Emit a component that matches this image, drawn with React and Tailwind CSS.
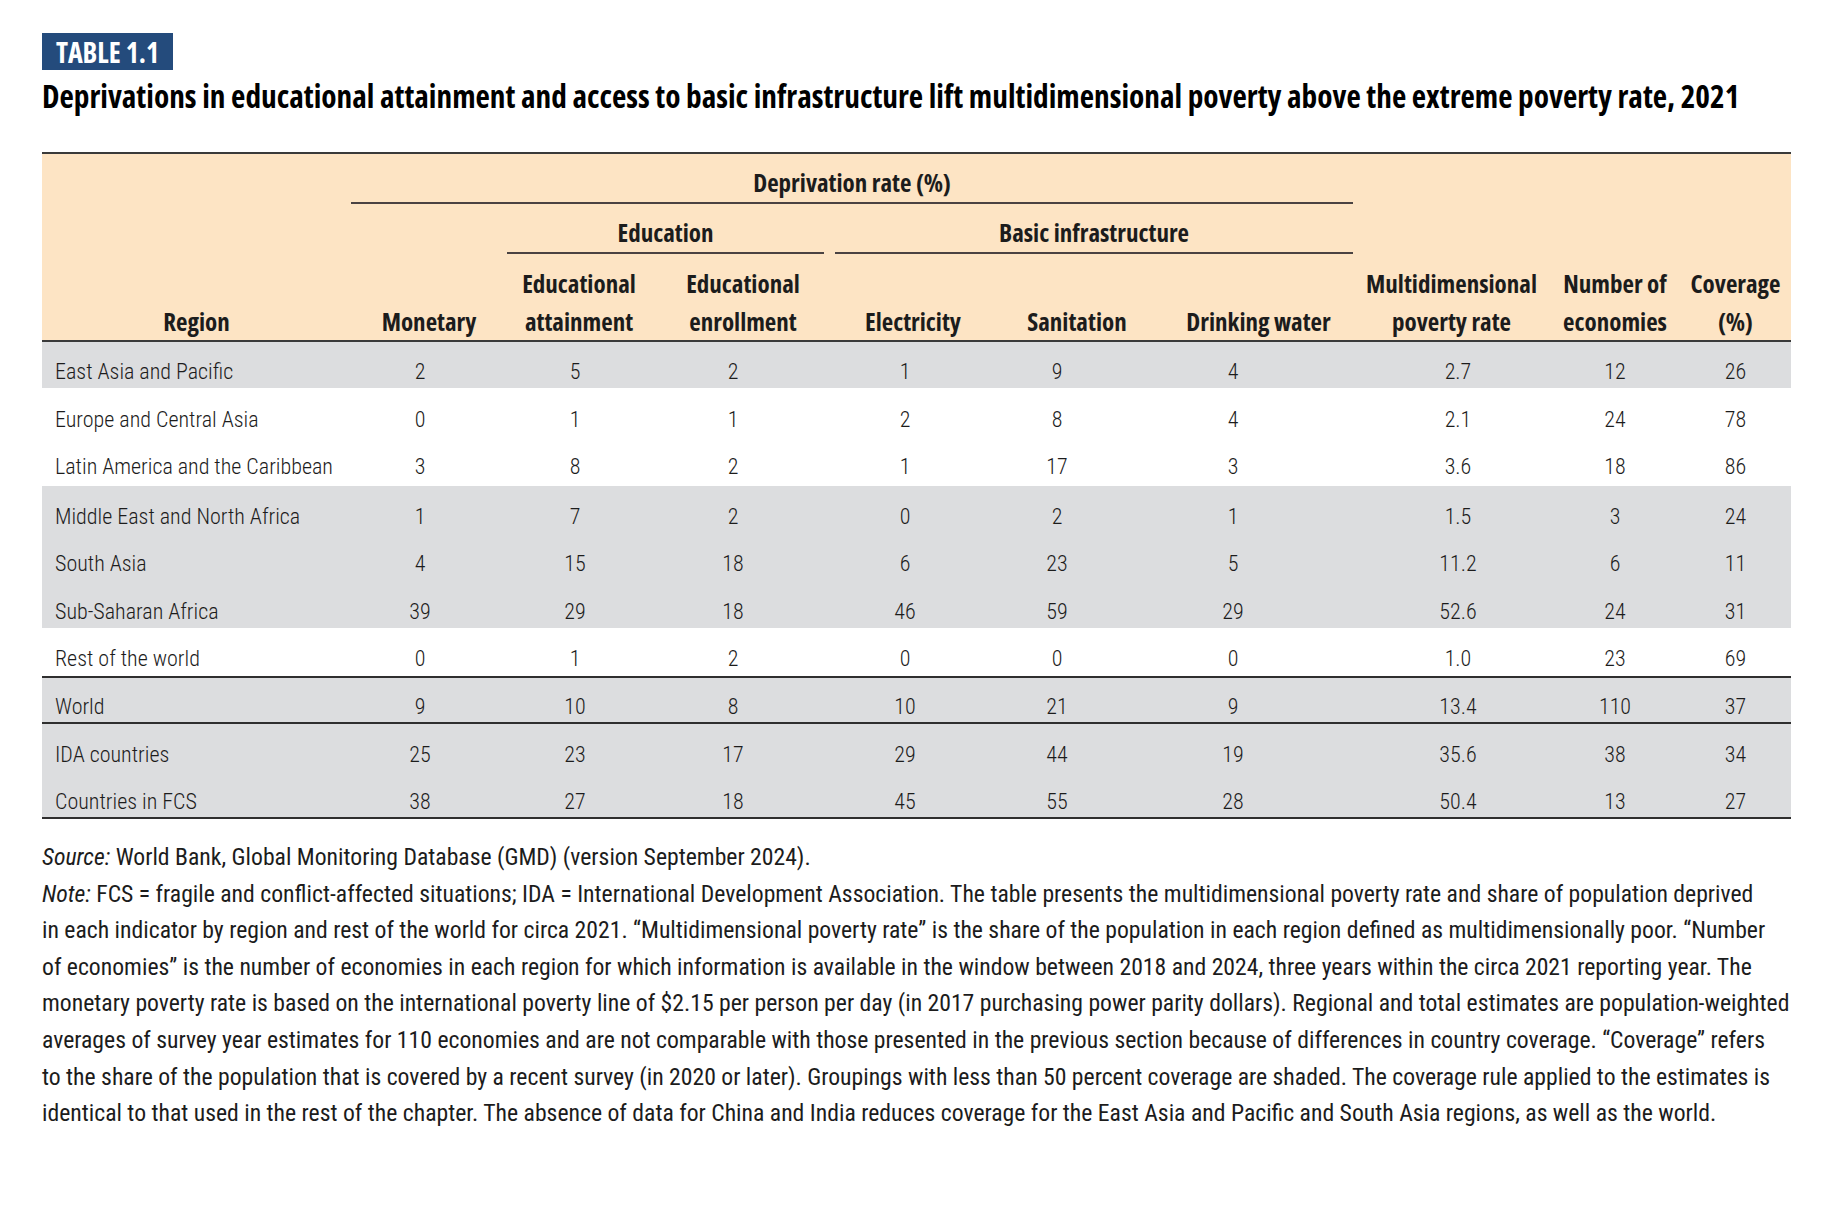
const COLS = 'grid grid-cols-[309px_156px_154px_169px_166px_162px_195px_197px_130px_111px]';

// horizontal nudges for the data cells, one per numeric column
const CELL_PAD = [
  'pr-[18px]',
  'pr-[18px]',
  'pr-[25px]',
  'pr-[16px]',
  'pr-[40px]',
  'pr-[45px]',
  'pl-[13px]',
  'pr-[0px]',
  'pr-[0px]',
];

const ROWS = [
  { region: 'East Asia and Pacific', v: ['2', '5', '2', '1', '9', '4', '2.7', '12', '26'], shade: true, cls: 'h-[46px] pt-[18px]' },
  { region: 'Europe and Central Asia', v: ['0', '1', '1', '2', '8', '4', '2.1', '24', '78'], cls: 'h-[48px] pt-[20px]' },
  { region: 'Latin America and the Caribbean', v: ['3', '8', '2', '1', '17', '3', '3.6', '18', '86'], cls: 'h-[50px] pt-[19px]' },
  { region: 'Middle East and North Africa', v: ['1', '7', '2', '0', '2', '1', '1.5', '3', '24'], shade: true, cls: 'h-[47px] pt-[19px]' },
  { region: 'South Asia', v: ['4', '15', '18', '6', '23', '5', '11.2', '6', '11'], shade: true, cls: 'h-[47px] pt-[19px]' },
  { region: 'Sub-Saharan Africa', v: ['39', '29', '18', '46', '59', '29', '52.6', '24', '31'], shade: true, cls: 'h-[48px] pt-[20px]' },
  { region: 'Rest of the world', v: ['0', '1', '2', '0', '0', '0', '1.0', '23', '69'], cls: 'h-[48px] pt-[19px]' },
  { region: 'World', v: ['9', '10', '8', '10', '21', '9', '13.4', '110', '37'], shade: true, cls: 'h-[48px] pt-[17px] border-y-2 border-[#2f2f2f]' },
  { region: 'IDA countries', v: ['25', '23', '17', '29', '44', '19', '35.6', '38', '34'], shade: true, cls: 'h-[47px] pt-[19px]' },
  { region: 'Countries in FCS', v: ['38', '27', '18', '45', '55', '28', '50.4', '13', '27'], shade: true, cls: 'h-[48px] pt-[19px] border-b-2 border-[#2f2f2f]' },
];

const NOTE_LINES = [
  'in each indicator by region and rest of the world for circa 2021. \u201cMultidimensional poverty rate\u201d is the share of the population in each region defined as multidimensionally poor. \u201cNumber',
  'of economies\u201d is the number of economies in each region for which information is available in the window between 2018 and 2024, three years within the circa 2021 reporting year. The',
  'monetary poverty rate is based on the international poverty line of $2.15 per person per day (in 2017 purchasing power parity dollars). Regional and total estimates are population-weighted',
  'averages of survey year estimates for 110 economies and are not comparable with those presented in the previous section because of differences in country coverage. \u201cCoverage\u201d refers',
  'to the share of the population that is covered by a recent survey (in 2020 or later). Groupings with less than 50 percent coverage are shaded. The coverage rule applied to the estimates is',
  'identical to that used in the rest of the chapter. The absence of data for China and India reduces coverage for the East Asia and Pacific and South Asia regions, as well as the world.',
];

function HeadCell({ children, className = '' }) {
  return (
    <div className={`flex flex-col items-center justify-end text-center leading-[38px] ${className}`}>
      {children}
    </div>
  );
}

export default function App() {
  return (
    <div className="min-h-screen bg-white pl-[42px] pt-[33px] font-['Roboto',sans-serif] text-[#1c1c1c]">
      <div className="inline-flex h-[37px] w-[131px] items-center justify-center bg-[#244b7c] font-['Open_Sans',sans-serif] text-[28px] font-bold text-white font-stretch-condensed">
        TABLE 1.1
      </div>
      <h1 className="mt-[8px] h-[36px] font-['Open_Sans',sans-serif] text-[31.3px] leading-[36px] font-bold text-black font-stretch-condensed">
        Deprivations in educational attainment and access to basic infrastructure lift multidimensional poverty above the extreme poverty rate, 2021
      </h1>

      <div className="mt-[38px] w-[1749px]">
        {/* header */}
        <div className="border-y-2 border-[#3a3a3a] bg-[#fde4c4] font-['Open_Sans',sans-serif] text-[25px] font-bold text-[#1c1c1c] font-stretch-condensed">
          <div className={`${COLS} h-[50px]`}>
            <div className="col-start-2 col-span-6 flex items-center justify-center border-b-2 border-[#4a4242] pt-[10px]">
              Deprivation rate (%)
            </div>
          </div>
          <div className={`${COLS} h-[50px]`}>
            <div className="col-start-3 col-span-2 mr-[6px] flex items-center justify-center border-b-2 border-[#4a4242] pt-[10px]">
              Education
            </div>
            <div className="col-span-3 ml-[5px] flex items-center justify-center border-b-2 border-[#4a4242] pt-[10px]">
              Basic infrastructure
            </div>
          </div>
          <div className={`${COLS} h-[86px]`}>
            <HeadCell>Region</HeadCell>
            <HeadCell>Monetary</HeadCell>
            <HeadCell className="pr-[10px]"><span>Educational</span><span>attainment</span></HeadCell>
            <HeadCell className="pr-[5px]"><span>Educational</span><span>enrollment</span></HeadCell>
            <HeadCell>Electricity</HeadCell>
            <HeadCell>Sanitation</HeadCell>
            <HeadCell className="pl-[6px]">Drinking water</HeadCell>
            <HeadCell><span>Multidimensional</span><span>poverty rate</span></HeadCell>
            <HeadCell><span>Number of</span><span>economies</span></HeadCell>
            <HeadCell><span>Coverage</span><span>(%)</span></HeadCell>
          </div>
        </div>

        {/* body */}
        <div className="text-[22px] leading-[24px] font-light text-[#1c1c1c] font-stretch-condensed">
          {ROWS.map((row) => (
            <div key={row.region} className={`${COLS} ${row.cls} ${row.shade ? 'bg-[#dcdddf]' : 'bg-white'}`}>
              <div className="pl-[13px] whitespace-nowrap">{row.region}</div>
              {row.v.map((val, i) => (
                <div key={i} className={`text-center ${CELL_PAD[i]}`}>{val}</div>
              ))}
            </div>
          ))}
        </div>
      </div>

      {/* notes */}
      <div className="mt-[20px] text-[23.7px] leading-[36.6px] font-normal text-[#1c1c1c] font-stretch-condensed whitespace-nowrap">
        <p>
          <em>Source:</em> World Bank, Global Monitoring Database (GMD) (version September 2024).
        </p>
        <p>
          <em>Note:</em> FCS = fragile and conflict-affected situations; IDA = International Development Association. The table presents the multidimensional poverty rate and share of population deprived
        </p>
        {NOTE_LINES.map((line) => (
          <p key={line}>{line}</p>
        ))}
      </div>
    </div>
  );
}
